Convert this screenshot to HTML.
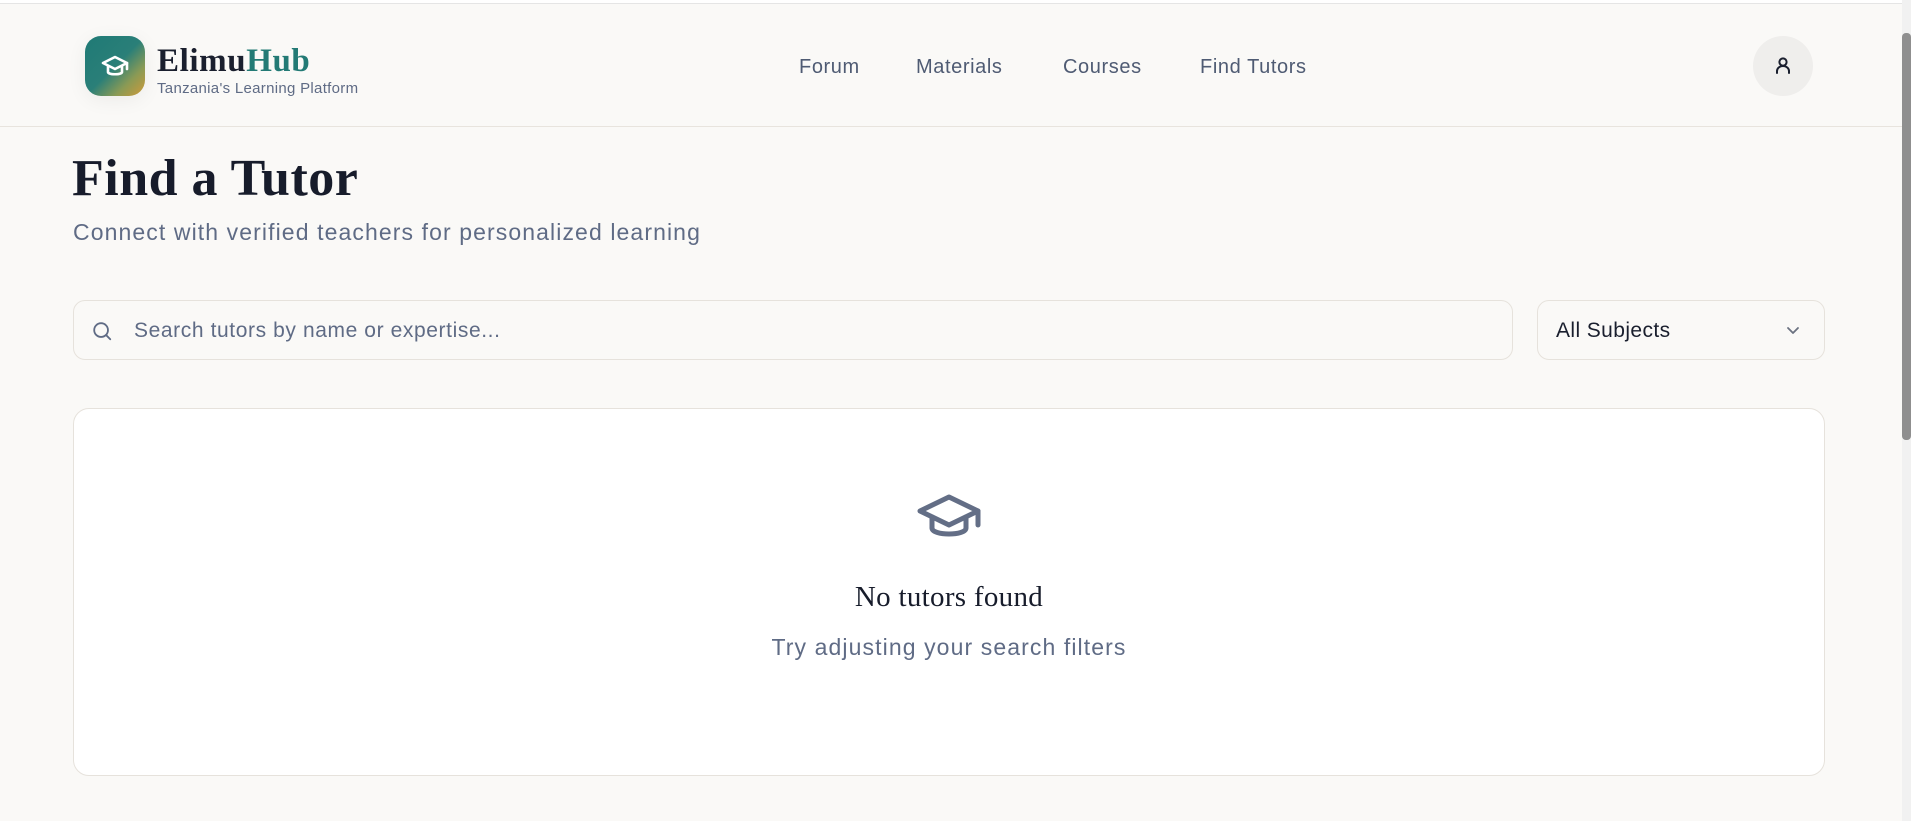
<!DOCTYPE html>
<html><head><meta charset="utf-8"><style>
*{box-sizing:border-box;margin:0;padding:0}
html,body{width:1911px;height:821px;overflow:hidden;background:#faf9f7;font-family:"Liberation Sans",sans-serif}
.top{position:absolute;left:0;top:0;width:1902px;height:4px;background:#fff;border-bottom:1px solid #e5e5e5}
.hdr{position:absolute;left:0;top:4px;width:1902px;height:123px;border-bottom:1px solid #e8e4de;background:#faf9f7}
.logo{position:absolute;left:85px;top:32px;width:60px;height:60px;border-radius:16px;background:linear-gradient(135deg,#1f7a76 0%,#2a7f78 50%,#8a9a55 75%,#d09a38 100%);box-shadow:0 4px 20px rgba(0,0,0,.06)}
.brand{position:absolute;left:157px;top:39px;font-family:"Liberation Serif",serif;font-weight:bold;font-size:33px;letter-spacing:0.6px;color:#1a1f2e}
.brand span{color:#237a75}
.tag{position:absolute;left:157px;top:76px;font-size:15px;letter-spacing:0.3px;color:#5f6b85}
.nav a{position:absolute;top:52px;font-size:20px;letter-spacing:0.6px;color:#4f5b73;text-decoration:none}
.av{position:absolute;left:1753px;top:32px;width:60px;height:60px;border-radius:50%;background:#efeeec}
.sb{position:absolute;left:1902px;top:0;width:9px;height:821px;background:#f1f1f1}
.th{position:absolute;left:1902px;top:33px;width:9px;height:407px;background:#8f8f8f;border-radius:4px}
h1{position:absolute;left:72px;top:149px;font-family:"Liberation Serif",serif;font-size:52px;letter-spacing:0.5px;color:#171c2b;font-weight:bold}
.sub{position:absolute;left:73px;top:219px;font-size:23px;letter-spacing:1.1px;color:#5f6b85}
.search{position:absolute;left:73px;top:300px;width:1440px;height:60px;border:1px solid #e6e2dc;border-radius:12px;background:#faf9f7}
.search .ph{position:absolute;left:60px;top:18px;font-size:21px;letter-spacing:0.6px;color:#5f6b85}
.sel{position:absolute;left:1537px;top:300px;width:288px;height:60px;border:1px solid #e6e2dc;border-radius:12px;background:#faf9f7}
.sel .t{position:absolute;left:18px;top:18px;font-size:21px;letter-spacing:0.4px;color:#1a1f2e}
.card{position:absolute;left:73px;top:408px;width:1752px;height:368px;border:1px solid #e6e2dc;border-radius:16px;background:#fff}
.nf{position:absolute;left:0;width:100%;top:172px;text-align:center;font-family:"Liberation Serif",serif;font-size:29px;letter-spacing:0.3px;color:#171c2b}
.tr{position:absolute;left:0;width:100%;top:225px;text-align:center;font-size:23px;letter-spacing:1.1px;color:#5f6b85}
</style></head><body>
<div class="top"></div>
<div class="hdr">
<div class="logo"><svg width="60" height="60" viewBox="0 0 60 60" fill="none" stroke="#fff" stroke-width="2.6" stroke-linecap="round" stroke-linejoin="round"><path d="M30 21 L42 27 L30 33 L18 27 Z"/><path d="M23 30 v6 c0 3 14 3 14 0 v-6"/><path d="M42 27 v6"/></svg></div>
<div class="brand">Elimu<span>Hub</span></div>
<div class="tag">Tanzania's Learning Platform</div>
<div class="nav"><a style="left:799px">Forum</a><a style="left:916px">Materials</a><a style="left:1063px">Courses</a><a style="left:1200px">Find Tutors</a></div>
<div class="av"><svg width="60" height="60" viewBox="0 0 60 60" fill="none" stroke="#1a1f2e" stroke-width="2" stroke-linecap="round"><circle cx="30" cy="26" r="3.6"/><path d="M24 37 v-2 a6 5 0 0 1 12 0 v2"/></svg></div>
</div>
<div class="sb"></div><div class="th"></div>
<h1>Find a Tutor</h1>
<div class="sub">Connect with verified teachers for personalized learning</div>
<div class="search"><svg style="position:absolute;left:17px;top:19px" width="22" height="22" viewBox="0 0 24 24" fill="none" stroke="#5f6b85" stroke-width="2" stroke-linecap="round"><circle cx="11" cy="11" r="7.5"/><path d="M17 17 l4 4"/></svg><div class="ph">Search tutors by name or expertise...</div></div>
<div class="sel"><div class="t">All Subjects</div><svg style="position:absolute;left:247px;top:24px" width="16" height="12" viewBox="0 0 16 12" fill="none" stroke="#6b7280" stroke-width="1.8" stroke-linecap="round" stroke-linejoin="round"><path d="M3 3 l5 5 l5 -5"/></svg></div>
<div class="card">
<svg style="position:absolute;left:842px;top:80px" width="68" height="60" viewBox="0 0 68 60" fill="none" stroke="#636e86" stroke-width="5" stroke-linecap="round" stroke-linejoin="round"><path d="M33 8 L62 22 L33 36 L4 22 Z"/><path d="M16 28 v11 c0 8 34 8 34 0 v-11"/><path d="M62 22 v14"/></svg>
<div class="nf">No tutors found</div>
<div class="tr">Try adjusting your search filters</div>
</div>
</body></html>
